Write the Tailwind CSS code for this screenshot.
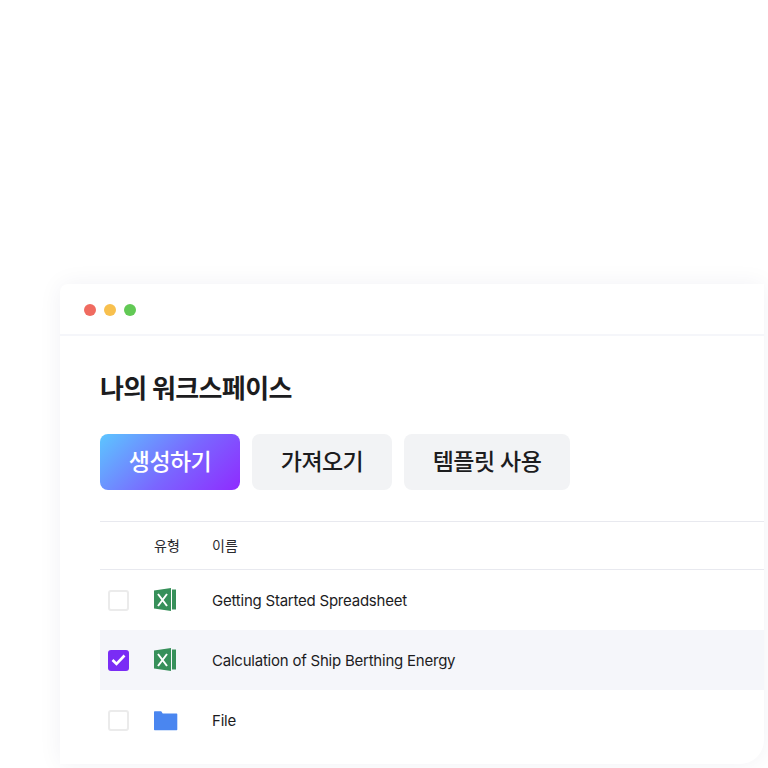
<!DOCTYPE html>
<html lang="ko">
<head>
    <meta charset="UTF-8">
    <title>Workspace</title>
    <script src="https://cdn.jsdelivr.net/npm/@tailwindcss/browser@4"></script>
</head>
<body class="bg-white font-['Inter','Noto_Sans_CJK_KR',sans-serif] overflow-hidden">
    <div class="h-[768px] w-[768px] pt-[284px] pl-[60px]">
        <div class="w-[704px] h-[480px] bg-white rounded-tl-lg rounded-br-[24px] shadow-[0_0_24px_rgba(30,40,80,0.06)] overflow-hidden">
            <div class="h-[52px] flex items-center gap-2 pl-6 pt-[2px] border-b-2 border-[#f5f6fa]">
                <span class="w-3 h-3 rounded-full bg-[#f06b60]"></span>
                <span class="w-3 h-3 rounded-full bg-[#f8c04e]"></span>
                <span class="w-3 h-3 rounded-full bg-[#62c955]"></span>
            </div>
            <div class="pl-10 pt-[35px]">
                <h1 class="text-[26px] leading-[36px] font-bold text-[#1c1c1e] tracking-[-0.025em]">나의 워크스페이스</h1>
                <div class="flex gap-3 mt-[27px]">
                    <button class="w-[140px] h-14 rounded-lg text-white text-[23px] font-medium tracking-[-0.025em] bg-linear-[135deg,#5cc6ff,#7a66ff_55%,#8f2bff]">생성하기</button>
                    <button class="w-[140px] h-14 rounded-lg bg-[#f2f3f5] text-[#1c1c1e] text-[23px] font-medium tracking-[-0.025em]">가져오기</button>
                    <button class="w-[166px] h-14 rounded-lg bg-[#f2f3f5] text-[#1c1c1e] text-[23px] font-medium tracking-[-0.025em]">템플릿 사용</button>
                </div>
                <div class="mt-[31px] border-t border-[#e8e9ef]">
                    <div class="h-[48px] flex items-center border-b border-[#e8e9ef] text-[14px] text-[#2a2a2e]">
                        <span class="w-[58px] ml-[54px]">유형</span>
                        <span>이름</span>
                    </div>
                    <div class="h-[60px] flex items-center text-[15px] text-[#1c1c1e] tracking-[-0.015em]">
                        <span class="ml-2 w-[21px] h-[21px] rounded-[3px] border-2 border-[#ebebeb] bg-white"></span>
                        <svg class="ml-[25px]" width="24" height="24" viewBox="0 0 24 24"><path fill="#37905a" d="M0 2.5 17 0v23L0 20.5z"/><path fill="#37905a" d="M18 1.5h4v20h-4z"/><path fill="none" stroke="#fff" stroke-width="2" d="M4 6l9 12M13 6l-9 12"/></svg>
                        <span class="ml-[34px] pt-[3px]">Getting Started Spreadsheet</span>
                    </div>
                    <div class="h-[60px] flex items-center bg-[#f5f6fa] text-[15px] text-[#1c1c1e] tracking-[-0.015em]">
                        <span class="ml-2 w-[21px] h-[21px] rounded-[3px] bg-[#7a2cf5] flex items-center justify-center">
                            <svg width="15" height="12" viewBox="0 0 15 12"><path fill="none" stroke="#fff" stroke-width="2.6" d="M1.5 6l4 4 8-8.5"/></svg>
                        </span>
                        <svg class="ml-[25px]" width="24" height="24" viewBox="0 0 24 24"><path fill="#37905a" d="M0 2.5 17 0v23L0 20.5z"/><path fill="#37905a" d="M18 1.5h4v20h-4z"/><path fill="none" stroke="#fff" stroke-width="2" d="M4 6l9 12M13 6l-9 12"/></svg>
                        <span class="ml-[34px] pt-[3px]">Calculation of Ship Berthing Energy</span>
                    </div>
                    <div class="h-[60px] flex items-center text-[15px] text-[#1c1c1e] tracking-[-0.015em]">
                        <span class="ml-2 w-[21px] h-[21px] rounded-[3px] border-2 border-[#ebebeb] bg-white"></span>
                        <svg class="ml-[25px]" width="24" height="24" viewBox="0 0 24 24"><path fill="#4a86f0" d="M0 4a.7.7 0 0 1 .7-.7h6.5l1.5 2.2h13.9a.7.7 0 0 1 .7.7v15.4a.7.7 0 0 1-.7.7H.7a.7.7 0 0 1-.7-.7z"/></svg>
                        <span class="ml-[34px] pt-[3px]">File</span>
                    </div>
                </div>
            </div>
        </div>
    </div>
</body>
</html>
